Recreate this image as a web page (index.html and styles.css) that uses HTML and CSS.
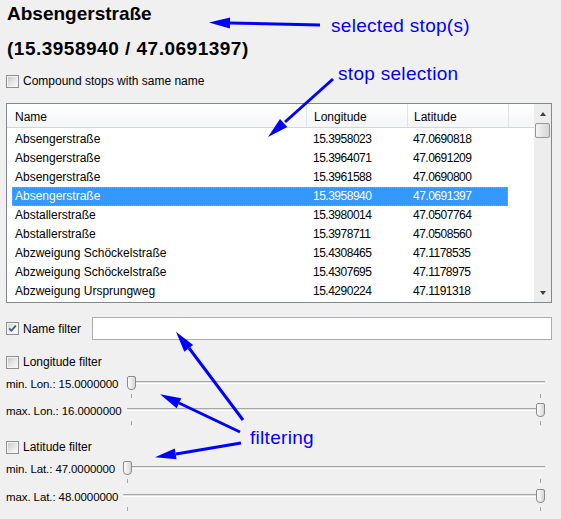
FILE: index.html
```html
<!DOCTYPE html>
<html>
<head>
<meta charset="utf-8">
<title>Stop selection</title>
<link rel="stylesheet" href="styles.css">
</head>
<body>
<div class="panel">
  <div class="title">Absengerstraße</div>
  <div class="coords">(15.3958940 / 47.0691397)</div>
  <div class="check-row compound"><span class="cb"></span><span>Compound stops with same name</span></div>

  <div class="table">
    <div class="list">
      <div class="header">
        <div class="h name">Name</div>
        <div class="h lon">Longitude</div>
        <div class="h lat">Latitude</div>
        <div class="h rest"></div>
      </div>
      <div class="rows">
        <div class="row"><div class="c name">Absengerstraße</div><div class="c lon num">15.3958023</div><div class="c lat num">47.0690818</div></div>
        <div class="row"><div class="c name">Absengerstraße</div><div class="c lon num">15.3964071</div><div class="c lat num">47.0691209</div></div>
        <div class="row"><div class="c name">Absengerstraße</div><div class="c lon num">15.3961588</div><div class="c lat num">47.0690800</div></div>
        <div class="row sel"><div class="c name">Absengerstraße</div><div class="c lon num">15.3958940</div><div class="c lat num">47.0691397</div></div>
        <div class="row"><div class="c name">Abstallerstraße</div><div class="c lon num">15.3980014</div><div class="c lat num">47.0507764</div></div>
        <div class="row"><div class="c name">Abstallerstraße</div><div class="c lon num">15.3978711</div><div class="c lat num">47.0508560</div></div>
        <div class="row"><div class="c name">Abzweigung Schöckelstraße</div><div class="c lon num">15.4308465</div><div class="c lat num">47.1178535</div></div>
        <div class="row"><div class="c name">Abzweigung Schöckelstraße</div><div class="c lon num">15.4307695</div><div class="c lat num">47.1178975</div></div>
        <div class="row"><div class="c name">Abzweigung Ursprungweg</div><div class="c lon num">15.4290224</div><div class="c lat num">47.1191318</div></div>
      </div>
    </div>
    <div class="scrollbar">
      <div class="sb-btn"><span class="tri up"></span></div>
      <div class="sb-thumb"></div>
      <div class="sb-track"></div>
      <div class="sb-btn"><span class="tri down"></span></div>
    </div>
  </div>

  <div class="name-row">
    <div class="check-row name-check">
      <span class="cb checked"><svg viewBox="0 0 11 11" width="11" height="11"><path d="M2.2 5.4 L4.4 7.8 L8.8 2.6" fill="none" stroke="#3c5585" stroke-width="1.7"/></svg></span><span>Name filter</span>
    </div>
    <input class="filter-input" type="text" value="">
  </div>

  <div class="check-row group-check lon-check"><span class="cb"></span><span>Longitude filter</span></div>
  <div class="slider-row lon first">
    <div class="slabel">min. Lon.: 15.0000000</div>
    <div class="slider"><div class="groove"></div><div class="thumb at-min"></div><div class="tick t-left"></div><div class="tick t-right"></div></div>
  </div>
  <div class="slider-row lon second">
    <div class="slabel">max. Lon.: 16.0000000</div>
    <div class="slider"><div class="groove"></div><div class="thumb at-max"></div><div class="tick t-left"></div><div class="tick t-right"></div></div>
  </div>

  <div class="check-row group-check lat-check"><span class="cb"></span><span>Latitude filter</span></div>
  <div class="slider-row lat first">
    <div class="slabel">min. Lat.: 47.0000000</div>
    <div class="slider"><div class="groove"></div><div class="thumb at-min"></div><div class="tick t-left"></div><div class="tick t-right"></div></div>
  </div>
  <div class="slider-row lat second last">
    <div class="slabel">max. Lat.: 48.0000000</div>
    <div class="slider"><div class="groove"></div><div class="thumb at-max"></div><div class="tick t-left"></div><div class="tick t-right"></div></div>
  </div>
</div>

<div class="annotations">
  <svg class="arrows" width="561" height="519" viewBox="0 0 561 519">
    <g stroke="#0000ff" stroke-width="3" fill="none">
      <line x1="320" y1="25" x2="229" y2="23"/>
      <line x1="333" y1="79" x2="285" y2="122"/>
      <line x1="243" y1="420" x2="189" y2="348"/>
      <line x1="240" y1="432" x2="179" y2="403"/>
      <line x1="241" y1="443" x2="176" y2="454"/>
    </g>
    <g fill="#0000ff">
      <polygon points="209,22.5 230.1,17.5 229.9,28.5"/>
      <polygon points="268,137 280,118.9 287.3,127.1"/>
      <polygon points="176,331.7 193.1,345.1 184.3,351.8"/>
      <polygon points="160,394.3 181.3,398.3 176.7,408.3"/>
      <polygon points="155,457.3 174.8,448.5 176.6,459.3"/>
    </g>
  </svg>
  <span class="note note-selected">selected stop(s)</span>
  <span class="note note-selection">stop selection</span>
  <span class="note note-filtering">filtering</span>
</div>
</body>
</html>
```

FILE: styles.css
```css
html, body {
  margin: 0;
  padding: 0;
}

body {
  width: 561px;
  height: 519px;
  background: #f0f0f0;
  font-family: "Liberation Sans", Arial, sans-serif;
  font-size: 12px;
  color: #000;
  position: relative;
  overflow: hidden;
}

.panel {
  display: flex;
  flex-direction: column;
  padding: 0 9px 0 6px;
}

.title {
  font-weight: bold;
  font-size: 19px;
  line-height: 28px;
  height: 28px;
  padding-left: 1px;
}

.coords {
  margin-top: 7px;
  font-weight: bold;
  font-size: 19px;
  line-height: 28px;
  height: 28px;
  letter-spacing: 0.5px;
  padding-left: 1px;
}

/* checkbox rows */
.check-row {
  display: flex;
  align-items: center;
  height: 20px;
}

.compound {
  margin-top: 8px;
}

.cb {
  position: relative;
  flex: none;
  width: 13px;
  height: 13px;
  box-sizing: border-box;
  border: 1px solid #8e8f8f;
  background: #f4f4f4;
  margin-right: 4px;
}

.cb::after {
  content: "";
  position: absolute;
  left: 1px;
  top: 1px;
  right: 1px;
  bottom: 1px;
  background: linear-gradient(135deg, #c9c9c9, #e9e9e9 60%, #f7f7f7);
}

.cb.checked::after {
  background: linear-gradient(135deg, #d7d7d7, #f2f2f2 60%, #fbfbfb);
}

.cb svg {
  position: absolute;
  left: 0;
  top: 0;
  z-index: 1;
}

/* table */
.table {
  margin-top: 12px;
  height: 200px;
  box-sizing: border-box;
  border: 1px solid #828790;
  background: #fff;
  display: flex;
}

.list {
  flex: 1;
  display: flex;
  flex-direction: column;
  overflow: hidden;
}

.header {
  display: flex;
  flex: none;
  height: 24px;
  box-sizing: border-box;
  background: linear-gradient(#ffffff, #f4f5f7);
  border-bottom: 1px solid #d5d5d5;
}

.h {
  box-sizing: border-box;
  padding-top: 4px;
  line-height: 19px;
  border-right: 1px solid #e2e3e5;
  white-space: nowrap;
}

.h.name { width: 300px; padding-left: 8px; }
.h.lon { width: 101px; padding-left: 7px; }
.h.lat { width: 101px; padding-left: 6px; }
.h.rest { flex: 1; border-right: 0; }

.rows {
  display: flex;
  flex-direction: column;
  padding-top: 2px;
}

.row {
  display: flex;
  flex: none;
  height: 19px;
  line-height: 19px;
  margin-left: 5px;
  width: 496px;
  white-space: nowrap;
}

.row.sel {
  background: #3399ff;
  color: #fff;
  outline: 1px dotted #e8912e;
  outline-offset: -1px;
}

.c {
  box-sizing: border-box;
}

.c.name { width: 295px; padding-left: 3px; }
.c.lon { width: 100px; padding-left: 6px; }
.c.lat { width: 101px; padding-left: 6px; }

.num {
  letter-spacing: -0.5px;
}

/* scrollbar */
.scrollbar {
  flex: none;
  width: 17px;
  background: #ededed;
  display: flex;
  flex-direction: column;
  align-items: center;
}

.sb-btn {
  height: 19px;
  width: 100%;
  display: flex;
  align-items: center;
  justify-content: center;
}

.tri {
  width: 0;
  height: 0;
  border-left: 3.5px solid transparent;
  border-right: 3.5px solid transparent;
}

.tri.up { border-bottom: 4px solid #404040; }
.tri.down { border-top: 4px solid #404040; }

.sb-thumb {
  width: 15px;
  height: 15px;
  box-sizing: border-box;
  border: 1px solid #979797;
  border-radius: 2px;
  background: linear-gradient(to right, #f4f4f4, #e4e4e4 50%, #d6d6d6);
}

.sb-track {
  flex: 1;
}

/* name filter */
.name-row {
  display: flex;
  align-items: center;
  height: 23px;
  margin-top: 14px;
}

.name-check {
  width: 86px;
  flex: none;
}

.filter-input {
  flex: 1;
  height: 23px;
  box-sizing: border-box;
  border: 1px solid #abadb3;
  background: #fff;
  margin: 0;
  padding: 0 3px;
  font: inherit;
  outline: none;
}

.lon-check { margin-top: 12px; }
.lat-check { margin-top: 16px; }

/* sliders */
.slider-row {
  display: flex;
  height: 20px;
  padding-right: 7px;
}

.slider-row.first { margin-top: 2px; }
.slider-row.lon.second { margin-top: 7px; }
.slider-row.lat.second { margin-top: 8px; }

.slabel {
  flex: none;
  font-size: 11.5px;
  line-height: 20px;
  white-space: nowrap;
  letter-spacing: -0.1px;
}

.lon .slabel { width: 121px; }
.lat .slabel { width: 117px; }

.slider {
  flex: 1;
  position: relative;
}

.groove {
  position: absolute;
  left: 0;
  right: 0;
  top: 7px;
  height: 3px;
  box-sizing: border-box;
  border-top: 1px solid #a7a7a7;
  background: #e4e4e4;
  border-bottom: 1px solid #ffffff;
}

.thumb {
  position: absolute;
  top: 2px;
  width: 9px;
  height: 14px;
  box-sizing: border-box;
  border: 1px solid #8a8a8a;
  border-radius: 2px 2px 4px 4px;
  background: linear-gradient(to right, #fbfbfb, #e9e9e9 55%, #d4d4d4);
}

.thumb.at-min { left: 0; }
.thumb.at-max { right: 0; }

.tick {
  position: absolute;
  top: 20px;
  width: 1px;
  height: 4px;
  background: #a3a3a3;
}

.tick.t-left { left: 4px; }
.tick.t-right { right: 4px; }

/* annotations overlay */
.annotations {
  position: absolute;
  left: 0;
  top: 0;
  width: 561px;
  height: 519px;
  pointer-events: none;
}

.arrows {
  position: absolute;
  left: 0;
  top: 0;
}

.note {
  position: absolute;
  color: #0000ff;
  font-family: "Liberation Sans", Arial, sans-serif;
  font-size: 19px;
  line-height: 19px;
  letter-spacing: 0.3px;
  white-space: nowrap;
}

.note-selected { left: 331px; top: 16px; }
.note-selection { left: 338px; top: 64px; }
.note-filtering { left: 250px; top: 428px; }
```
